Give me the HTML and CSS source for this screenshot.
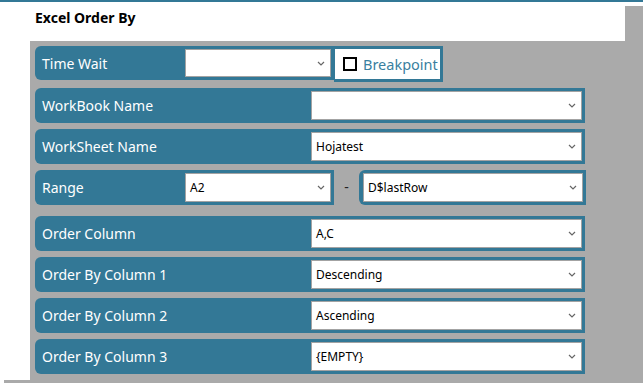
FILE: index.html
```html
<!DOCTYPE html>
<html lang="en">
<head>
    <meta charset="UTF-8">
    <title>Excel Order By</title>
    <link rel="stylesheet" href="styles.css">
</head>
<body>

    <div class="top-line"></div>
    <div class="top-gap"></div>

    <div class="header">Excel Order By</div>

    <div class="main">
        <div class="gutter"></div>
        <div class="panel">

            <!-- Time wait + breakpoint -->
            <div class="row row-first">
                <div class="field field-short">
                    <span class="label">Time Wait</span>
                    <div class="combo combo-short"><span class="value"></span><svg class="chev" viewBox="0 0 8 5"><path d="M1 1 L4 4 L7 1"/></svg></div>
                </div>
                <div class="breakpoint">
                    <span class="check"></span>
                    <span>Breakpoint</span>
                </div>
            </div>

            <div class="row">
                <div class="field">
                    <span class="label">WorkBook Name</span>
                    <div class="combo"><span class="value"></span><svg class="chev" viewBox="0 0 8 5"><path d="M1 1 L4 4 L7 1"/></svg></div>
                </div>
            </div>

            <div class="row">
                <div class="field">
                    <span class="label">WorkSheet Name</span>
                    <div class="combo"><span class="value">Hojatest</span><svg class="chev" viewBox="0 0 8 5"><path d="M1 1 L4 4 L7 1"/></svg></div>
                </div>
            </div>

            <!-- Range: from / to -->
            <div class="row row-range">
                <div class="field field-short">
                    <span class="label">Range</span>
                    <div class="combo combo-short"><span class="value">A2</span><svg class="chev" viewBox="0 0 8 5"><path d="M1 1 L4 4 L7 1"/></svg></div>
                </div>
                <span class="dash">-</span>
                <div class="field field-end">
                    <div class="combo"><span class="value">D$lastRow</span><svg class="chev" viewBox="0 0 8 5"><path d="M1 1 L4 4 L7 1"/></svg></div>
                </div>
            </div>

            <div class="row">
                <div class="field">
                    <span class="label">Order Column</span>
                    <div class="combo"><span class="value">A,C</span><svg class="chev" viewBox="0 0 8 5"><path d="M1 1 L4 4 L7 1"/></svg></div>
                </div>
            </div>

            <div class="row">
                <div class="field">
                    <span class="label">Order By Column 1</span>
                    <div class="combo"><span class="value">Descending</span><svg class="chev" viewBox="0 0 8 5"><path d="M1 1 L4 4 L7 1"/></svg></div>
                </div>
            </div>

            <div class="row">
                <div class="field">
                    <span class="label">Order By Column 2</span>
                    <div class="combo"><span class="value">Ascending</span><svg class="chev" viewBox="0 0 8 5"><path d="M1 1 L4 4 L7 1"/></svg></div>
                </div>
            </div>

            <div class="row">
                <div class="field">
                    <span class="label">Order By Column 3</span>
                    <div class="combo"><span class="value">{EMPTY}</span><svg class="chev" viewBox="0 0 8 5"><path d="M1 1 L4 4 L7 1"/></svg></div>
                </div>
            </div>

        </div>
    </div>

    <div class="bottom-strip"></div>

</body>
</html>
```

FILE: styles.css
```css
body {
    font-family: 'Noto Sans', 'Open Sans', sans-serif;
    background-color: #aaaaaa;
    margin: 0;
    padding: 0;
    width: 643px;
    height: 383px;
    overflow: hidden;
}
.top-line {
    height: 2px;
    background-color: #337896;
}
.top-gap {
    height: 4px;
    background-color: #ffffff;
}
.header {
    width: 590px;
    height: 35px;
    padding-left: 35px;
    background-color: #ffffff;
    font-size: 14px;
    font-weight: bold;
    color: #000000;
    line-height: 24px;
}
.main {
    display: flex;
    height: 339px;
}
.gutter {
    width: 30px;
    background-color: #ffffff;
}
.panel {
    flex: 1;
    padding: 5px 0 0 5px;
    display: flex;
    flex-direction: column;
    gap: 6px;
}
.bottom-strip {
    height: 3px;
    border-left: 4px solid #ffffff;
}

/* Rows */
.row {
    display: flex;
    align-items: flex-start;
    height: 35px;
}
.row-first {
    height: 36px;
}
.row-range {
    margin-bottom: 5px;
}
.field {
    display: flex;
    align-items: center;
    justify-content: space-between;
    width: 550px;
    height: 100%;
    box-sizing: border-box;
    padding: 3px 3px 3px 7px;
    background-color: #337896;
    border-radius: 6px 0 0 6px;
}
.row-first .field {
    height: 34px;
}
.field-short {
    width: 299px;
}
.field-end {
    width: 227px;
    padding-left: 4px;
}
.label {
    color: #ffffff;
    font-size: 14px;
}
.dash {
    width: 25px;
    text-align: center;
    font-size: 14px;
    color: #222222;
    line-height: 33px;
}

/* Combo boxes */
.combo {
    display: flex;
    align-items: center;
    justify-content: space-between;
    width: 271px;
    height: 100%;
    box-sizing: border-box;
    padding: 0 5px 0 4px;
    background-color: #ffffff;
    border: 1px solid #a3a3a3;
    font-size: 12px;
    color: #000000;
}
.combo-short {
    width: 146px;
}
.field-end .combo {
    width: 220px;
}
.chev {
    width: 8px;
    height: 5px;
    fill: none;
    stroke: #666666;
    stroke-width: 1.2;
}

/* Breakpoint */
.breakpoint {
    display: flex;
    align-items: center;
    gap: 6px;
    height: 36px;
    width: 109px;
    box-sizing: border-box;
    padding-left: 8px;
    background-color: #ffffff;
    border: 3px solid #337896;
    border-left-width: 1px;
    color: #3a7fa0;
    font-size: 14.5px;
}
.check {
    width: 10px;
    height: 10px;
    border: 2px solid #000000;
}
```
